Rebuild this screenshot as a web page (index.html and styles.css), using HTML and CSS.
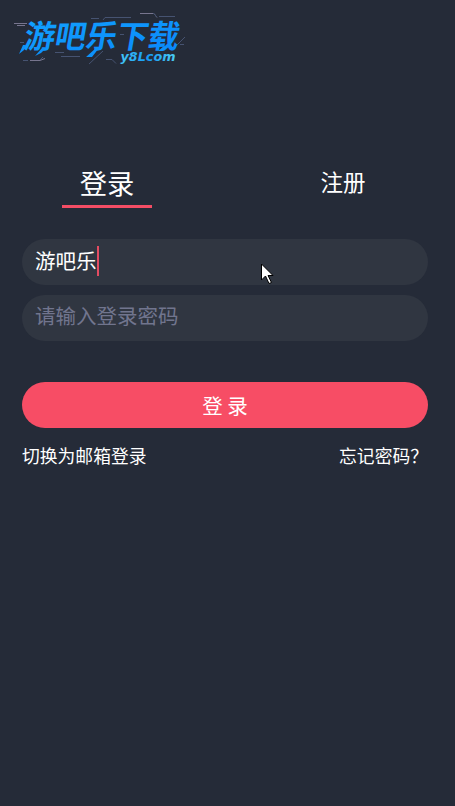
FILE: index.html
```html
<!DOCTYPE html>
<html lang="zh-CN">
<head>
<meta charset="utf-8">
<title>登录</title>
<link rel="stylesheet" href="styles.css">
</head>
<body>
<main class="page">
  <header class="brand">
    <svg class="logo" width="200" height="72" viewBox="0 0 200 72">
      <defs>
        <linearGradient id="blue" x1="0" y1="0" x2="1" y2="1"><stop offset="0" stop-color="#12a4ff"/><stop offset="1" stop-color="#0a86fa"/></linearGradient>
        <linearGradient id="cyan" x1="0" y1="0" x2="1" y2="0"><stop offset="0" stop-color="#42c6f6"/><stop offset=".5" stop-color="#1599f5"/><stop offset="1" stop-color="#4ccdf2"/></linearGradient>
      </defs>
      <g fill="none" stroke-width="1">
        <path stroke="#77758e" d="M14 23.500h13M17 25.500h8M140 13.500h14l3 4M30 60.500h10l5-2"/>
        <path stroke="#465371" d="M159 16.500h16M91 18.500h8M103 20l2-2.500h26M153 13l4 4M20 42.500h4M23 60.500h5M40 60l3-3M55 52.500h9M61 56.500h19M89 64l14-13M106 59.500h6l4 4M120 34.500h4M174 48l11-11M180 44.500h4"/>
      </g>
      <g transform="translate(22.500 48) skewX(-10)">
        <text class="logo-name" y="0" textLength="155" lengthAdjust="spacingAndGlyphs" fill="url(#blue)">游吧乐下载</text>
      </g>
      <path fill="#0d91fa" d="M23 45h3l-2 5-5 4zM42 48h4l-5 5-6 3zM96 48h3l-7 9h-6zM163 47h4l-4 4h-5z"/>
      <text class="logo-site" x="120.500" y="61" textLength="55" lengthAdjust="spacingAndGlyphs" fill="url(#cyan)">y8Lcom</text>
    </svg>
  </header>
  <nav class="tabs">
    <a class="tab tab-active">登录</a>
    <a class="tab">注册</a>
  </nav>
  <form class="form">
    <div class="field"><span>游吧乐</span><i class="caret"></i></div>
    <div class="field field-empty"><span>请输入登录密码</span></div>
    <button class="submit" type="button">登 录</button>
    <div class="links"><a>切换为邮箱登录</a><a>忘记密码？</a></div>
  </form>
  <svg class="pointer" width="14" height="22" viewBox="0 0 14 22"><path d="M.5 1v16l4-4 3.500 7.500 2.500-1-3.500-7H12z" fill="#fff" stroke="#000"/></svg>
</main>
</body>
</html>
```
FILE: styles.css
```css
* { box-sizing: border-box; }
body {
  margin: 0;
  background: #252b38;
  color: #fff;
  font-family: "Noto Sans CJK SC", sans-serif;
}
.page { position: relative; height: 806px; overflow: hidden; }
.brand { height: 72px; }
.logo { display: block; overflow: visible; }
.logo-name { font-size: 32px; font-weight: 700; }
.logo-site { font: italic bold 12.5px "DejaVu Sans", sans-serif; }
.tabs {
  display: flex;
  justify-content: space-between;
  margin-top: 88px;
  padding: 0 67px 0 62px;
}
.tab {
  width: 90px;
  height: 48px;
  font-size: 22.5px;
  line-height: 42px;
  text-align: center;
}
.tab-active {
  font-size: 27.3px;
  line-height: 44px;
  border-bottom: 3px solid #f44d65;
}
.form { margin: 31px 27px 0 22px; }
.field {
  display: flex;
  align-items: center;
  height: 46px;
  margin-bottom: 10px;
  padding: 0 13px 4px;
  border-radius: 23px;
  background: #303641;
  font-size: 20.5px;
  line-height: 30px;
}
.field-empty { padding-bottom: 6px; color: #71758e; }
.caret { width: 2.5px; height: 30px; margin-top: 2px; background: #e34c62; }
.submit {
  display: block;
  width: 100%;
  height: 45.5px;
  margin-top: 41px;
  padding: 0;
  border: 0;
  border-radius: 23px;
  background: #f74d65;
  color: #fff;
  font: 20.5px/46px "Noto Sans CJK SC", sans-serif;
}
.links {
  display: flex;
  justify-content: space-between;
  margin-top: 13.5px;
  font-size: 17.8px;
  line-height: 28px;
}
.pointer { position: absolute; left: 261px; top: 263px; }
```
